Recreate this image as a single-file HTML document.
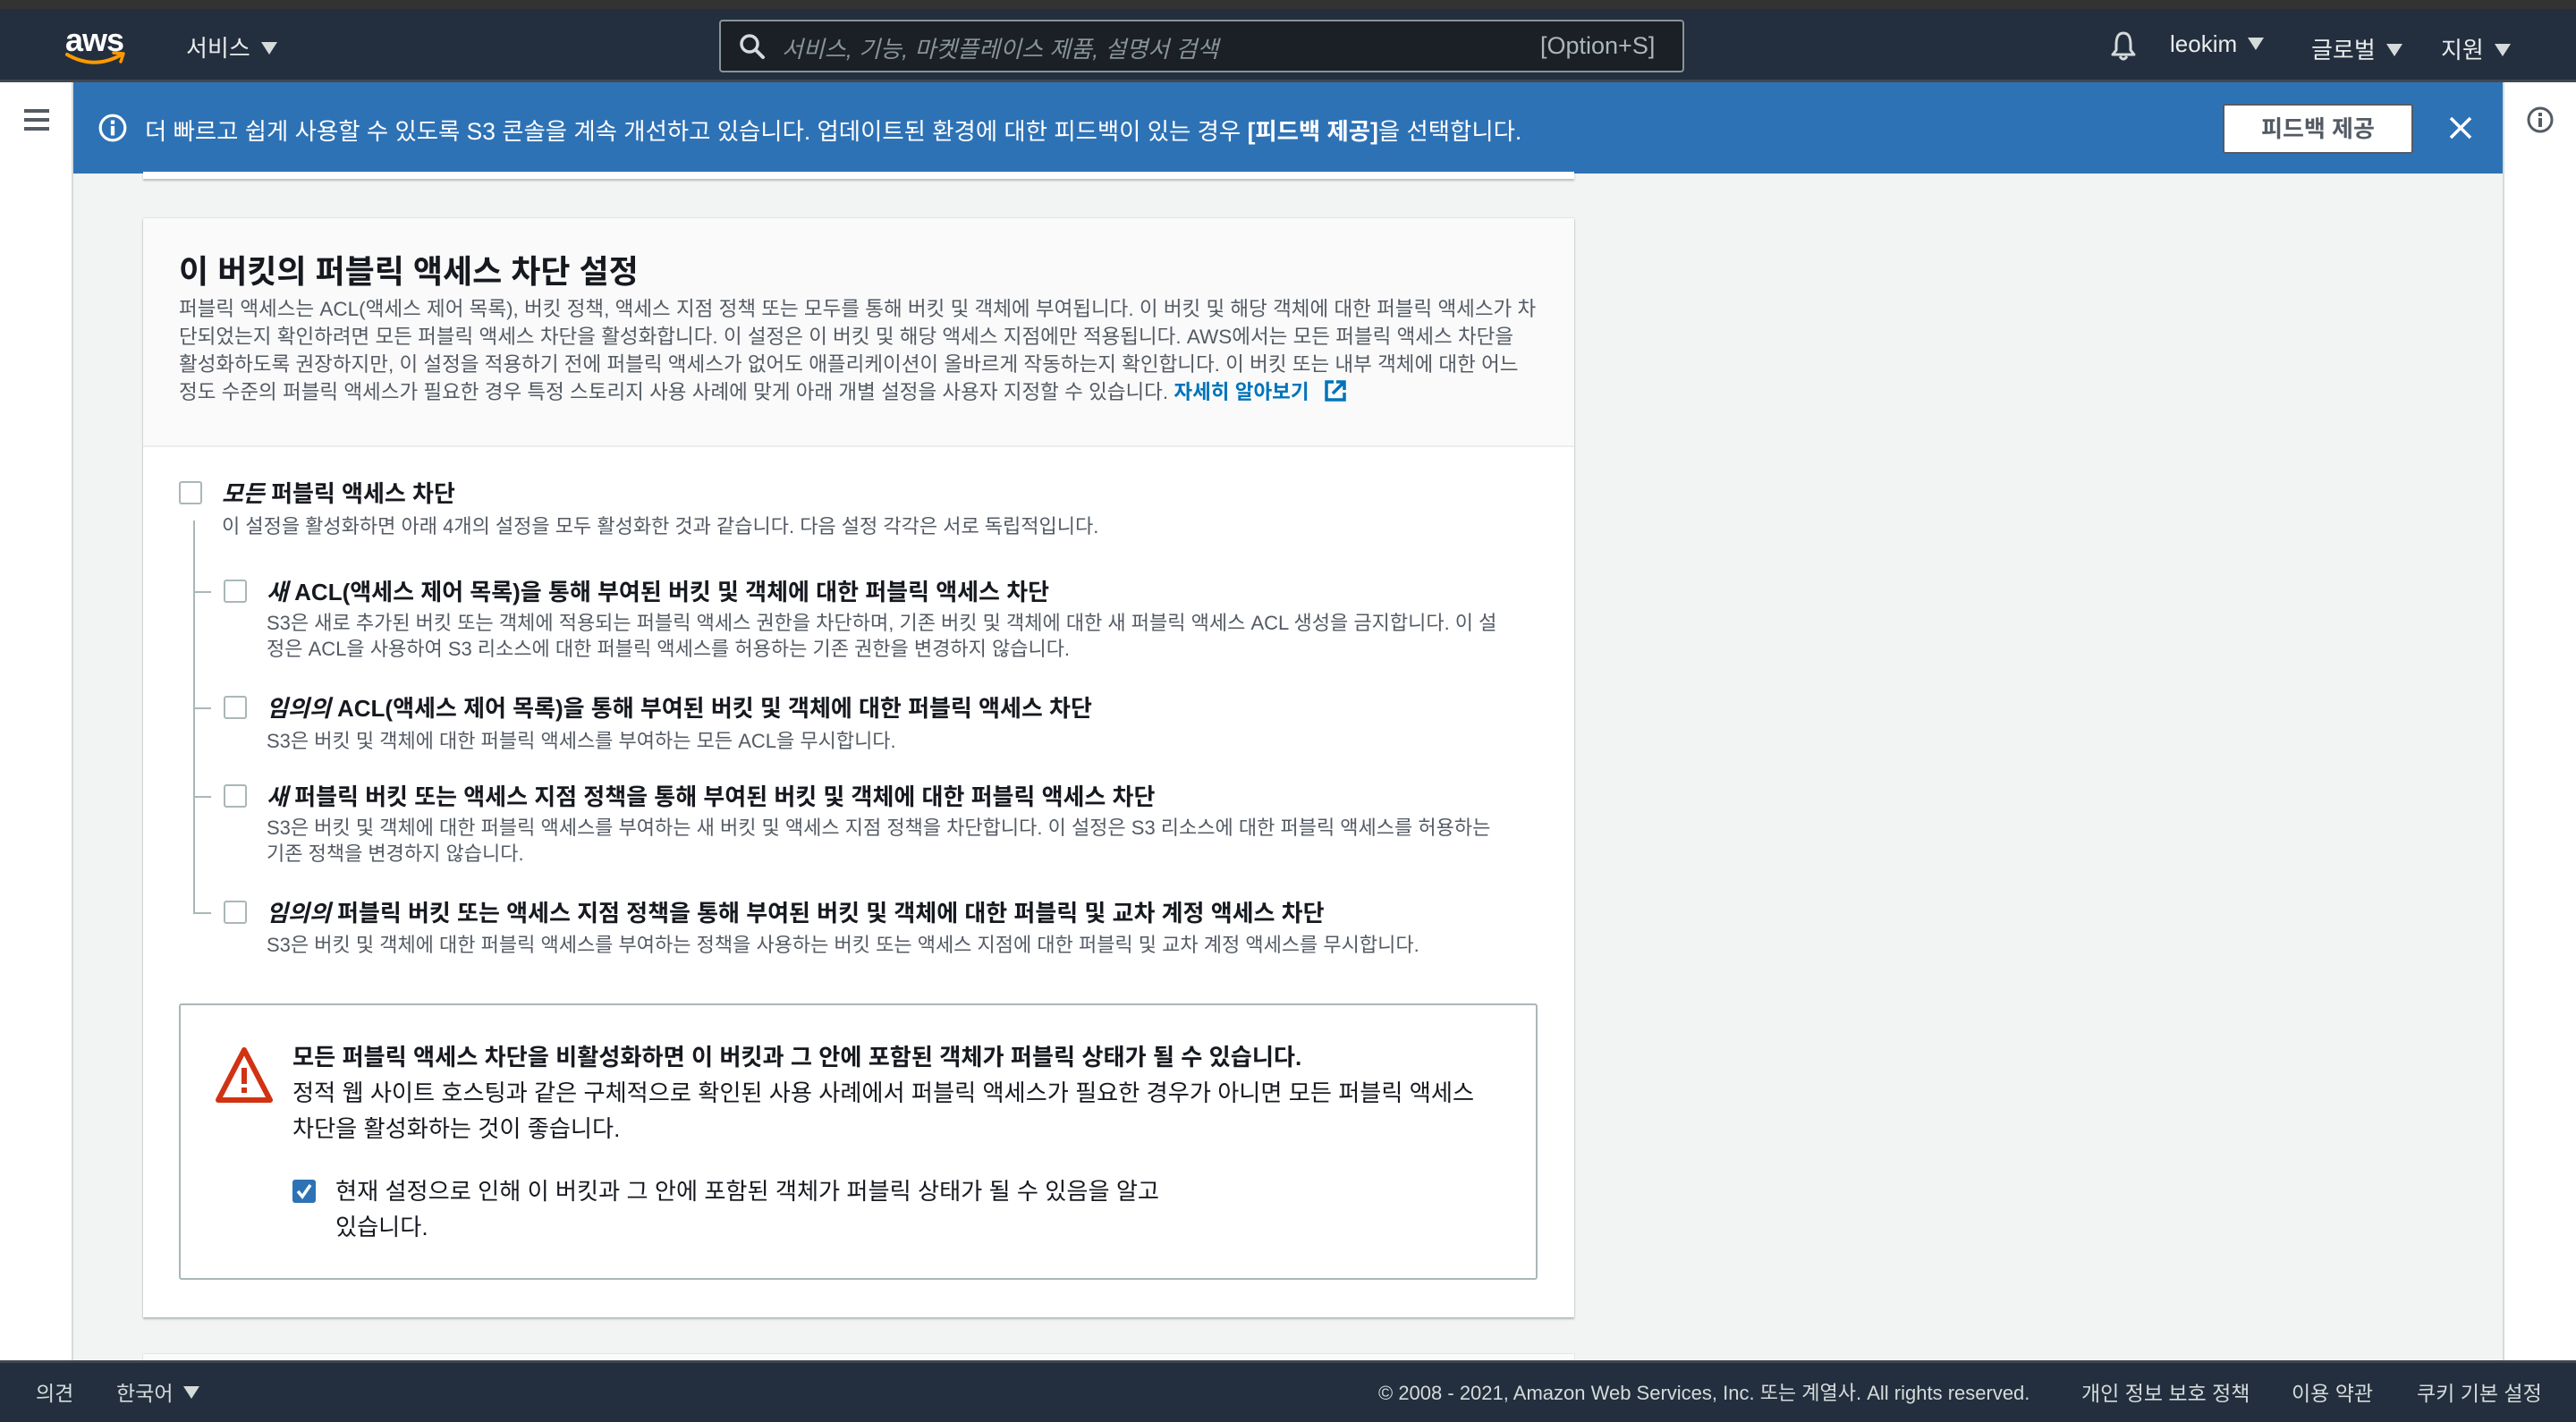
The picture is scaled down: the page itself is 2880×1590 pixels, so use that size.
<!DOCTYPE html>
<html><head><meta charset="utf-8">
<style>
*{margin:0;padding:0;box-sizing:border-box}
body{width:2880px;height:1590px;overflow:hidden;background:#f2f3f3;font-family:"Liberation Sans","Noto Sans CJK KR",sans-serif;position:relative;color:#16191f}
.a{position:absolute;white-space:nowrap}
.top{left:0;top:0;width:2880px;height:10px;background:#333}
.nav{left:0;top:10px;width:2880px;height:82px;background:#232f3e;border-bottom:3px solid #414750}
.navt{color:#eaeded;font-size:26px}
.tri{display:inline-block;width:0;height:0;border-left:9px solid transparent;border-right:9px solid transparent;border-top:14px solid #d5dbdb;margin-left:12px;vertical-align:2px}
.search{left:804px;top:22px;width:1079px;height:59px;background:#1b1f26;border:2px solid #879596;border-radius:4px}
.side{left:0;top:92px;width:82px;height:1430px;background:#fff;border-right:2px solid #d5dbdb}
.rside{left:2798px;top:92px;width:82px;height:1430px;background:#fff;border-left:2px solid #d5dbdb}
.banner{left:82px;top:92px;width:2716px;height:102px;background:#2e72b6}
.card{left:160px;top:244px;width:1600px;height:1229px;background:#fff;box-shadow:0 2px 2px rgba(0,33,43,.25),0 0 1px rgba(0,28,36,.3)}
.hdr{left:0;top:0;width:1600px;height:256px;background:#fafafa;border-bottom:2px solid #eaeded}
.d{color:#545b64;font-size:22px}
.b{font-weight:bold;color:#16191f;font-size:26px}
.cb{width:26px;height:26px;border:2px solid #aab7b8;border-radius:3px;background:#fff}
.foot{left:0;top:1521px;width:2880px;height:69px;background:#232f3e;border-top:3px solid #414750}
.ft{color:#d5dbdb;font-size:23px;top:1539px}
</style></head><body>
<div class="a top"></div>
<div class="a nav"></div>
<div class="a" style="left:73px;top:24px;color:#fff;font-size:36px;font-weight:bold;letter-spacing:-1px;font-family:'Liberation Sans',sans-serif">aws</div>
<svg class="a" style="left:72px;top:56px" width="70" height="20" viewBox="0 0 70 20"><path d="M3 5 Q33 22 62 6" fill="none" stroke="#f90" stroke-width="4" stroke-linecap="round"/><path d="M55 3 L66 4 L63 13" fill="none" stroke="#f90" stroke-width="3.5" stroke-linecap="round" stroke-linejoin="round"/></svg>
<div class="a navt" style="left:208px;top:34px">서비스<span class="tri"></span></div>
<div class="a search"></div>
<svg class="a" style="left:826px;top:37px" width="30" height="30" viewBox="0 0 30 30"><circle cx="12" cy="12" r="9" fill="none" stroke="#d5dbdb" stroke-width="3.5"/><path d="M19 19 L27 27" stroke="#d5dbdb" stroke-width="4" stroke-linecap="round"/></svg>
<div class="a" style="left:874px;top:35px;color:#879596;font-size:26px;font-style:italic">서비스, 기능, 마켓플레이스 제품, 설명서 검색</div>
<div class="a" style="left:1722px;top:36px;color:#aab7b8;font-size:27px">[Option+S]</div>
<svg class="a" style="left:2358px;top:34px" width="32" height="36" viewBox="0 0 32 36"><path d="M16 3 C9 3 8 10 8 16 L8 22 L4 27 L28 27 L24 22 L24 16 C24 10 23 3 16 3 Z M12 29 Q16 35 20 29" fill="none" stroke="#d5dbdb" stroke-width="3" stroke-linejoin="round"/></svg>
<div class="a navt" style="left:2426px;top:34px">leokim<span class="tri"></span></div>
<div class="a navt" style="left:2584px;top:36px">글로벌<span class="tri"></span></div>
<div class="a navt" style="left:2729px;top:36px">지원<span class="tri"></span></div>

<div class="a side"></div>
<div class="a" style="left:27px;top:122px;width:28px;height:4px;background:#545b64;box-shadow:0 10px 0 #545b64,0 20px 0 #545b64"></div>
<div class="a rside"></div>
<svg class="a" style="left:2824px;top:118px" width="32" height="32" viewBox="0 0 32 32"><circle cx="16" cy="16" r="13" fill="none" stroke="#545b64" stroke-width="3"/><rect x="14" y="14" width="4" height="10" fill="#545b64"/><rect x="14" y="8" width="4" height="4" fill="#545b64"/></svg>

<div class="a banner"></div>
<svg class="a" style="left:109px;top:126px" width="34" height="34" viewBox="0 0 32 32"><circle cx="16" cy="16" r="13" fill="none" stroke="#fff" stroke-width="3"/><rect x="14" y="14" width="4" height="10" fill="#fff"/><rect x="14" y="8" width="4" height="4" fill="#fff"/></svg>
<div class="a" style="left:162px;top:125px;color:#fff;font-size:26.4px">더 빠르고 쉽게 사용할 수 있도록 S3 콘솔을 계속 개선하고 있습니다. 업데이트된 환경에 대한 피드백이 있는 경우 <b>[피드백 제공]</b>을 선택합니다.</div>
<div class="a" style="left:2485px;top:116px;width:213px;height:56px;background:#fff;border:2px solid #545b64;border-radius:3px;font-weight:bold;color:#545b64;font-size:26px;text-align:center;line-height:52px">피드백 제공</div>
<svg class="a" style="left:2736px;top:128px" width="30" height="30" viewBox="0 0 30 30"><path d="M4 4 L26 26 M26 4 L4 26" stroke="#fff" stroke-width="3.5"/></svg>

<div class="a" style="left:160px;top:192px;width:1600px;height:8px;background:#fff;box-shadow:0 2px 2px rgba(0,33,43,.25)"></div>

<div class="a card">
 <div class="a hdr"></div>
 <div class="a" style="left:40px;top:31px;font-size:36px;font-weight:bold;color:#16191f">이 버킷의 퍼블릭 액세스 차단 설정</div>
 <div class="a d" style="left:40px;top:86px;line-height:31px;font-size:22.5px">퍼블릭 액세스는 ACL(액세스 제어 목록), 버킷 정책, 액세스 지점 정책 또는 모두를 통해 버킷 및 객체에 부여됩니다. 이 버킷 및 해당 객체에 대한 퍼블릭 액세스가 차<br>단되었는지 확인하려면 모든 퍼블릭 액세스 차단을 활성화합니다. 이 설정은 이 버킷 및 해당 액세스 지점에만 적용됩니다. AWS에서는 모든 퍼블릭 액세스 차단을<br>활성화하도록 권장하지만, 이 설정을 적용하기 전에 퍼블릭 액세스가 없어도 애플리케이션이 올바르게 작동하는지 확인합니다. 이 버킷 또는 내부 객체에 대한 어느<br>정도 수준의 퍼블릭 액세스가 필요한 경우 특정 스토리지 사용 사례에 맞게 아래 개별 설정을 사용자 지정할 수 있습니다. <b style="color:#0073bb">자세히 알아보기</b> <svg width="26" height="26" viewBox="0 0 26 26" style="vertical-align:-4px;margin-left:10px"><path d="M11 3 L3 3 L3 23 L23 23 L23 15" fill="none" stroke="#0073bb" stroke-width="3.5"/><path d="M10 16 L22 4 M14 3 L23 3 L23 12" fill="none" stroke="#0073bb" stroke-width="3.5"/></svg></div>

 <div class="a cb" style="left:40px;top:294px"></div>
 <div class="a b" style="left:88px;top:288px"><i>모든</i> 퍼블릭 액세스 차단</div>
 <div class="a d" style="left:88px;top:327px">이 설정을 활성화하면 아래 4개의 설정을 모두 활성화한 것과 같습니다. 다음 설정 각각은 서로 독립적입니다.</div>
 <div class="a" style="left:56px;top:338px;width:2px;height:440px;background:#aab7b8"></div>
 <div class="a" style="left:56px;top:417px;width:20px;height:2px;background:#aab7b8"></div>
 <div class="a" style="left:56px;top:547px;width:20px;height:2px;background:#aab7b8"></div>
 <div class="a" style="left:56px;top:646px;width:20px;height:2px;background:#aab7b8"></div>
 <div class="a" style="left:56px;top:776px;width:20px;height:2px;background:#aab7b8"></div>

 <div class="a cb" style="left:90px;top:404px"></div>
 <div class="a b" style="left:138px;top:398px"><i>새</i> ACL(액세스 제어 목록)을 통해 부여된 버킷 및 객체에 대한 퍼블릭 액세스 차단</div>
 <div class="a d" style="left:138px;top:438px;line-height:29px">S3은 새로 추가된 버킷 또는 객체에 적용되는 퍼블릭 액세스 권한을 차단하며, 기존 버킷 및 객체에 대한 새 퍼블릭 액세스 ACL 생성을 금지합니다. 이 설<br>정은 ACL을 사용하여 S3 리소스에 대한 퍼블릭 액세스를 허용하는 기존 권한을 변경하지 않습니다.</div>

 <div class="a cb" style="left:90px;top:534px"></div>
 <div class="a b" style="left:138px;top:528px"><i>임의의</i> ACL(액세스 제어 목록)을 통해 부여된 버킷 및 객체에 대한 퍼블릭 액세스 차단</div>
 <div class="a d" style="left:138px;top:567px">S3은 버킷 및 객체에 대한 퍼블릭 액세스를 부여하는 모든 ACL을 무시합니다.</div>

 <div class="a cb" style="left:90px;top:633px"></div>
 <div class="a b" style="left:138px;top:627px"><i>새</i> 퍼블릭 버킷 또는 액세스 지점 정책을 통해 부여된 버킷 및 객체에 대한 퍼블릭 액세스 차단</div>
 <div class="a d" style="left:138px;top:667px;line-height:29px">S3은 버킷 및 객체에 대한 퍼블릭 액세스를 부여하는 새 버킷 및 액세스 지점 정책을 차단합니다. 이 설정은 S3 리소스에 대한 퍼블릭 액세스를 허용하는<br>기존 정책을 변경하지 않습니다.</div>

 <div class="a cb" style="left:90px;top:763px"></div>
 <div class="a b" style="left:138px;top:757px"><i>임의의</i> 퍼블릭 버킷 또는 액세스 지점 정책을 통해 부여된 버킷 및 객체에 대한 퍼블릭 및 교차 계정 액세스 차단</div>
 <div class="a d" style="left:138px;top:795px">S3은 버킷 및 객체에 대한 퍼블릭 액세스를 부여하는 정책을 사용하는 버킷 또는 액세스 지점에 대한 퍼블릭 및 교차 계정 액세스를 무시합니다.</div>

 <div class="a" style="left:40px;top:878px;width:1519px;height:309px;border:2px solid #aab7b8;border-radius:3px;background:#fff"></div>
 <svg class="a" style="left:80px;top:926px" width="66" height="64" viewBox="0 0 66 64"><path d="M33 4 L62 60 L4 60 Z" fill="none" stroke="#d13212" stroke-width="6" stroke-linejoin="round"/><rect x="30" y="24" width="6" height="18" fill="#d13212"/><rect x="30" y="46" width="6" height="6" fill="#d13212"/></svg>
 <div class="a" style="left:167px;top:918px;font-size:26.2px;line-height:40px;color:#16191f"><b>모든 퍼블릭 액세스 차단을 비활성화하면 이 버킷과 그 안에 포함된 객체가 퍼블릭 상태가 될 수 있습니다.</b><br>정적 웹 사이트 호스팅과 같은 구체적으로 확인된 사용 사례에서 퍼블릭 액세스가 필요한 경우가 아니면 모든 퍼블릭 액세스<br>차단을 활성화하는 것이 좋습니다.</div>
 <div class="a" style="left:167px;top:1075px;width:26px;height:26px;background:#2e72b6;border-radius:3px"></div>
 <svg class="a" style="left:167px;top:1075px" width="26" height="26" viewBox="0 0 26 26"><path d="M6 13 L11 19 L20 6" fill="none" stroke="#fff" stroke-width="3.5"/></svg>
 <div class="a" style="left:215px;top:1068px;font-size:26.2px;line-height:40px;color:#16191f">현재 설정으로 인해 이 버킷과 그 안에 포함된 객체가 퍼블릭 상태가 될 수 있음을 알고<br>있습니다.</div>
</div>

<div class="a" style="left:160px;top:1514px;width:1600px;height:8px;background:#fafafa;box-shadow:0 0 1px rgba(0,28,36,.3)"></div>

<div class="a foot"></div>
<div class="a ft" style="left:40px">의견</div>
<div class="a ft" style="left:130px">한국어<span class="tri"></span></div>
<div class="a ft" style="left:1541px;font-size:22px;top:1540px">© 2008 - 2021, Amazon Web Services, Inc. 또는 계열사. All rights reserved.</div>
<div class="a ft" style="left:2327px">개인 정보 보호 정책</div>
<div class="a ft" style="left:2562px">이용 약관</div>
<div class="a ft" style="left:2702px">쿠키 기본 설정</div>
</body></html>
